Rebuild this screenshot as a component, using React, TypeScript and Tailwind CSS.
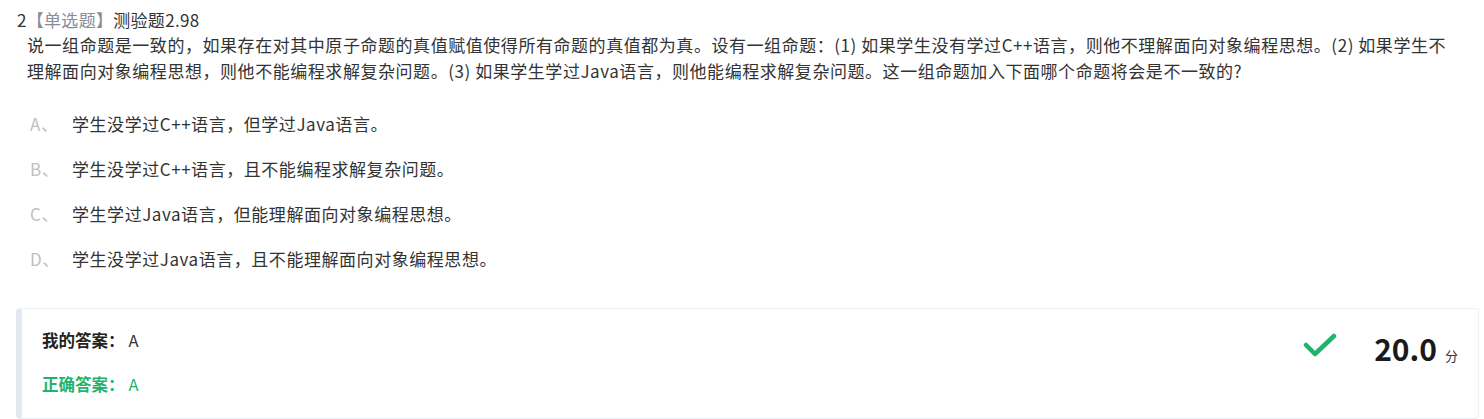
import React from "react";

const font = { fontFamily: '"Noto Sans CJK SC", "Noto Sans", sans-serif' };

const options = [
  ["A、", "学生没学过C++语言，但学过Java语言。"],
  ["B、", "学生没学过C++语言，且不能编程求解复杂问题。"],
  ["C、", "学生学过Java语言，但能理解面向对象编程思想。"],
  ["D、", "学生没学过Java语言，且不能理解面向对象编程思想。"],
];

export default function App() {
  return (
    <div
      className="w-[1484px] h-[419px] bg-white text-[#333333] overflow-hidden"
      style={font}
    >
      <div className="pl-[17px] pt-[8px] text-[17px] leading-[24px] tracking-[0.3px]">
        2<span className="text-[#8a8b99]">【单选题】</span>测验题2.98
      </div>
      <div className="pl-[27px] pr-[10px] text-[17px] leading-[26px] tracking-[0.55px]">
        <div className="whitespace-nowrap">
          说一组命题是一致的，如果存在对其中原子命题的真值赋值使得所有命题的真值都为真。设有一组命题：(1) 如果学生没有学过C++语言，则他不理解面向对象编程思想。(2) 如果学生不
        </div>
        <div className="whitespace-nowrap">
          理解面向对象编程思想，则他不能编程求解复杂问题。(3) 如果学生学过Java语言，则他能编程求解复杂问题。这一组命题加入下面哪个命题将会是不一致的?
        </div>
      </div>
      <div className="pt-[17px] flex flex-col">
        {options.map(([k, t]) => (
          <div key={k} className="flex items-center h-[45px] text-[17px] tracking-[0.55px]">
            <span className="pl-[30px] w-[72px] text-[#c0c0c0]">{k}</span>
            <span>{t}</span>
          </div>
        ))}
      </div>
      <div className="mt-[27px] ml-[16px] mr-[5px] h-[111px] border border-[#eef0f4] border-l-[6px] border-l-[#e3e8f2] rounded-[4px] flex">
        <div className="flex-1 pl-[20px] pt-[18px] text-[16.5px]">
          <div className="h-[26px] flex items-center">
            <span className="font-bold text-[#222]">我的答案：</span>
            <span className="ml-[4px]">A</span>
          </div>
          <div className="mt-[18px] h-[26px] flex items-center text-[#1fb36e]">
            <span className="font-bold">正确答案：</span>
            <span className="ml-[4px]">A</span>
          </div>
        </div>
        <div className="flex items-start pt-[22px] pr-[20px]">
          <svg width="34" height="26" viewBox="0 0 34 26" className="mt-[2px]">
            <path
              d="M3 12 L12 21 L31 3"
              fill="none"
              stroke="#1fb36e"
              strokeWidth="4.5"
              strokeLinecap="round"
              strokeLinejoin="round"
            />
          </svg>
          <div className="ml-[37px] flex items-baseline">
            <span className="text-[30px] font-bold text-[#1a1a1a] leading-[34px]">20.0</span>
            <span className="ml-[8px] text-[13px] text-[#333]">分</span>
          </div>
        </div>
      </div>
    </div>
  );
}
